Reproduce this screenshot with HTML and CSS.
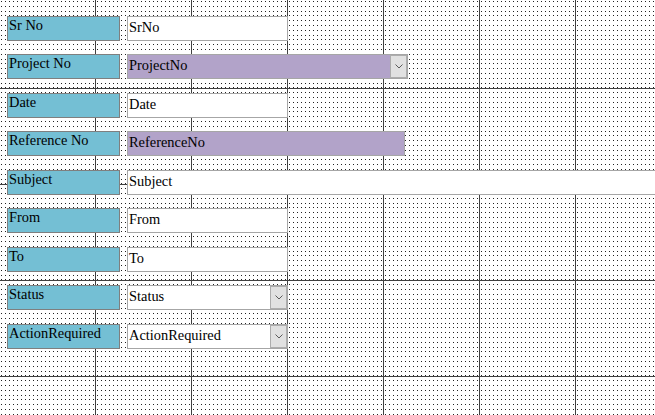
FILE: index.html
```html
<!DOCTYPE html>
<html lang="en">
<head>
<meta charset="utf-8">
<title>Form Design</title>
<link rel="stylesheet" href="styles.css">
</head>
<body>
<div class="canvas">
  <div class="form">
    <div class="row">
      <div class="label">Sr No</div>
      <div class="field w-short">SrNo</div>
    </div>
    <div class="row">
      <div class="label">Project No</div>
      <div class="field combo purple w-project">
        <span class="value">ProjectNo</span>
        <span class="drop"><svg width="8" height="5" viewBox="0 0 8 5"><polyline points="0.5,0.5 4,4 7.5,0.5" fill="none" stroke="#5a5a5a" stroke-width="1"/></svg></span>
      </div>
    </div>
    <div class="row">
      <div class="label">Date</div>
      <div class="field w-short">Date</div>
    </div>
    <div class="row">
      <div class="label">Reference No</div>
      <div class="field purple w-ref">ReferenceNo</div>
    </div>
    <div class="row">
      <div class="label">Subject</div>
      <div class="field w-wide">Subject</div>
    </div>
    <div class="row">
      <div class="label">From</div>
      <div class="field w-short">From</div>
    </div>
    <div class="row">
      <div class="label">To</div>
      <div class="field w-short">To</div>
    </div>
    <div class="row">
      <div class="label">Status</div>
      <div class="field combo w-short">
        <span class="value">Status</span>
        <span class="drop"><svg width="8" height="5" viewBox="0 0 8 5"><polyline points="0.5,0.5 4,4 7.5,0.5" fill="none" stroke="#5a5a5a" stroke-width="1"/></svg></span>
      </div>
    </div>
    <div class="row">
      <div class="label">ActionRequired</div>
      <div class="field combo w-short">
        <span class="value">ActionRequired</span>
        <span class="drop"><svg width="8" height="5" viewBox="0 0 8 5"><polyline points="0.5,0.5 4,4 7.5,0.5" fill="none" stroke="#5a5a5a" stroke-width="1"/></svg></span>
      </div>
    </div>
  </div>
</div>
</body>
</html>
```
FILE: styles.css
```css
html, body {
  margin: 0;
  padding: 0;
  background: #fff;
}

.canvas {
  width: 655px;
  height: 415px;
  overflow: hidden;
  background-color: #fff;
  background-image:
    linear-gradient(to right, #404040 1px, transparent 1px),
    linear-gradient(to bottom, #404040 1px, transparent 1px),
    linear-gradient(to right, transparent 1px, #fff 1px),
    linear-gradient(to bottom, #222 1px, transparent 1px),
    linear-gradient(to bottom, #222 1px, transparent 1px),
    linear-gradient(to bottom, #222 1px, transparent 1px),
    linear-gradient(to bottom, #222 1px, transparent 1px),
    linear-gradient(to bottom, #222 1px, transparent 1px);
  background-size: 96px 100%, 100% 96px, 4px 4px,
    100% 24px, 100% 24px, 100% 24px, 100% 24px, 100% 24px;
  background-position: 95px 0, 0 88px, 1px 0,
    0 1px, 0 6px, 0 11px, 0 15px, 0 20px;
  font-family: "Liberation Serif", "Times New Roman", serif;
  font-size: 14.4px;
  color: #000;
}

.form {
  padding: 16px 0 0 7px;
  display: flex;
  flex-direction: column;
}

.row {
  display: flex;
  gap: 7px;
  height: 25px;
  margin-bottom: 13px;
}

.row:nth-child(even) {
  margin-bottom: 14px;
}

.label {
  box-sizing: border-box;
  width: 113px;
  height: 25px;
  flex: none;
  background: #74bfd4;
  border: 1px solid #7f7f7f;
  padding: 0 1px;
  line-height: 17px;
  white-space: nowrap;
  overflow: hidden;
}

.field {
  box-sizing: border-box;
  height: 25px;
  flex: none;
  background: #fff;
  border: 1px solid #a6a6a6;
  padding: 1px 1px 0;
  line-height: 18px;
  white-space: nowrap;
  overflow: hidden;
}

.purple {
  background: #b2a3c9;
}

.w-short { width: 161px; }
.w-project { width: 281px; }
.w-ref { width: 278px; }
.w-wide { width: 640px; }

.combo {
  display: flex;
  padding: 0;
}

.combo .value {
  flex: 1;
  padding: 1px 1px 0;
  overflow: hidden;
}

.drop {
  box-sizing: border-box;
  width: 17px;
  height: 23px;
  flex: none;
  background: #e1e1e1;
  border: 1px solid #adadad;
  display: flex;
  align-items: center;
  justify-content: center;
}

.drop svg {
  display: block;
}
```
